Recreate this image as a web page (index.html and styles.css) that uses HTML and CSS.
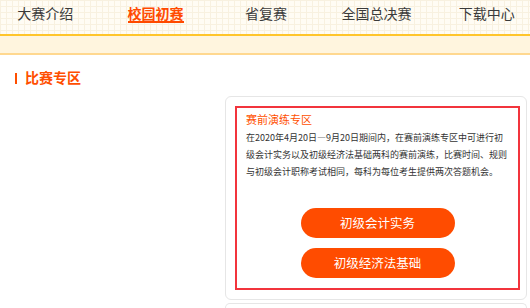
FILE: index.html
```html
<!DOCTYPE html>
<html lang="zh-CN">
<head>
    <meta charset="UTF-8">
    <meta name="viewport" content="width=device-width, initial-scale=1.0">
    <title>校园初赛 - 比赛专区</title>
    <link rel="stylesheet" href="styles.css">
</head>
<body>

    <header class="top-nav">
        <ul class="nav-list">
            <li><a href="#">大赛介绍</a></li>
            <li><a href="#" class="active">校园初赛</a></li>
            <li><a href="#">省复赛</a></li>
            <li><a href="#">全国总决赛</a></li>
            <li><a href="#">下载中心</a></li>
        </ul>
    </header>

    <div class="notice-band"></div>

    <main class="content">
        <h2 class="section-title">比赛专区</h2>

        <div class="zone-list">
            <div class="zone-card">
                <div class="zone-box">
                    <h3 class="zone-title">赛前演练专区</h3>
                    <p class="zone-desc">在2020年4月20日—9月20日期间内，在赛前演练专区中可进行初级会计实务以及初级经济法基础两科的赛前演练，比赛时间、规则与初级会计职称考试相同，每科为每位考生提供两次答题机会。</p>
                    <div class="zone-actions">
                        <a href="#" class="btn-subject">初级会计实务</a>
                        <a href="#" class="btn-subject">初级经济法基础</a>
                    </div>
                </div>
            </div>
            <div class="zone-card zone-card-next"></div>
        </div>
    </main>

</body>
</html>
```

FILE: styles.css
```css
/* General Body Styles */
body {
    margin: 0;
    font-family: "Noto Sans CJK SC", "Noto Sans", sans-serif;
    background-color: #ffffff;
    color: #333;
    overflow: hidden;
}

/* Top navigation with faint grid paper */
.top-nav {
    height: 34px;
    background-color: #fffcf4;
    background-image:
        linear-gradient(to right, #f8f1e0 1px, transparent 1px),
        linear-gradient(to bottom, #f8f1e0 1px, transparent 1px);
    background-size: 6px 6px;
    overflow: hidden;
}

.nav-list {
    list-style: none;
    margin: 0 -12px 0 -10px;
    padding: 0;
    display: grid;
    grid-template-columns: repeat(5, 1fr);
}

.nav-list li {
    text-align: center;
}

.nav-list a {
    display: inline-block;
    padding-top: 6px;
    font-size: 14px;
    line-height: 15px;
    color: #3a3a3a;
    text-decoration: none;
    border-bottom: 2px solid transparent;
}

.nav-list a.active {
    color: #ff4a00;
    font-weight: bold;
    border-bottom-color: #ff4a00;
}

/* Yellow band under the nav */
.notice-band {
    height: 17px;
    background-color: #fff5de;
    border-top: 2px solid #ffc52b;
    border-bottom: 2px solid #ffd88f;
}

/* Section heading */
.section-title {
    margin: 0;
    padding: 14px 0 0 15px;
    font-size: 14px;
    line-height: 16px;
    font-weight: bold;
    color: #ff4e00;
}

.section-title::before {
    content: "";
    display: inline-block;
    width: 2px;
    height: 11px;
    margin-right: 8px;
    vertical-align: -1px;
    background-color: #ff4e00;
}

/* Cards column */
.zone-list {
    padding: 11px 3px 0 225px;
    display: flex;
    flex-direction: column;
    gap: 3px;
}

.zone-card {
    border: 1px solid #e6e6e6;
    border-radius: 6px;
    padding: 9px 6px 9px 9px;
    background-color: #fff;
}

/* Next card, only its top edge shows */
.zone-card-next {
    height: 4px;
    padding: 0;
    border-bottom: none;
    border-radius: 6px 6px 0 0;
}

.zone-box {
    border: 2px solid #f2343c;
    height: 177px;
    padding: 3px 9px 0 9px;
    overflow: hidden;
}

.zone-title {
    margin: 0;
    font-size: 11px;
    line-height: 16px;
    font-weight: normal;
    color: #ff5000;
}

.zone-desc {
    margin: 2px 0 0;
    font-size: 9px;
    line-height: 17px;
    color: #333;
}

/* Subject buttons */
.zone-actions {
    margin-top: 28px;
    display: flex;
    flex-direction: column;
    align-items: center;
    gap: 10px;
}

.btn-subject {
    width: 154px;
    height: 30px;
    line-height: 30px;
    border-radius: 15px;
    background-color: #ff4c00;
    color: #ffffff;
    font-size: 12.5px;
    text-align: center;
    text-decoration: none;
}
```
